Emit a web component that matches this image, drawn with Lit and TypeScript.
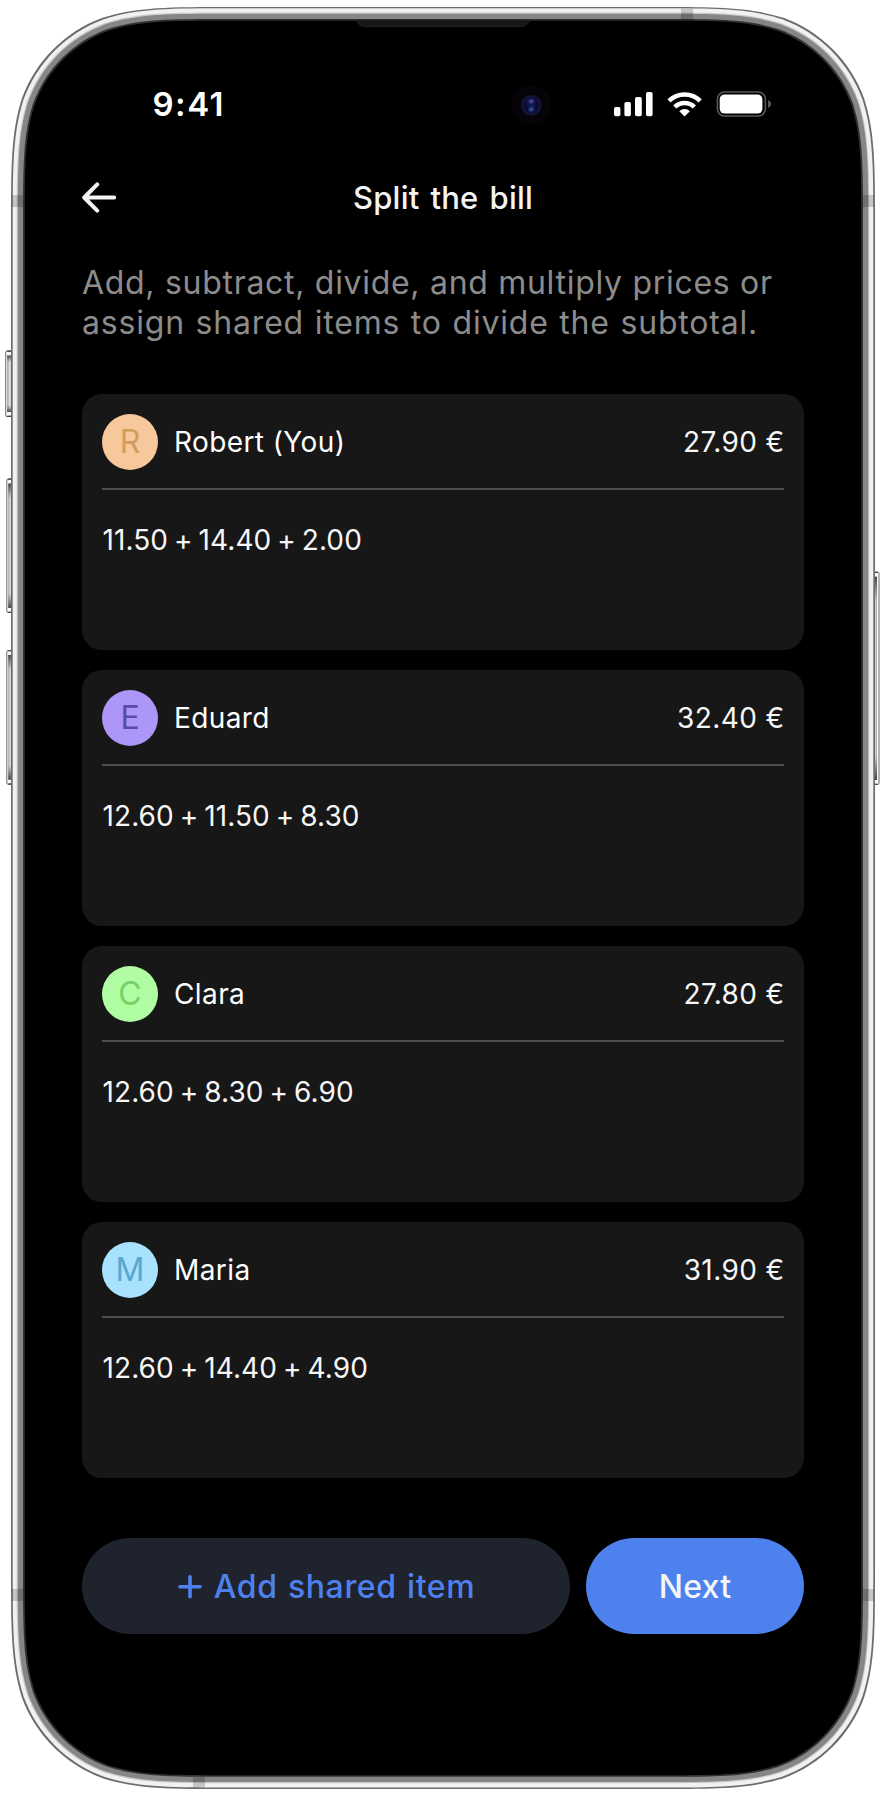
import { LitElement, html, svg, css } from "lit";
import { customElement, property } from "lit/decorators.js";
import { styleMap } from "lit/directives/style-map.js";

/** Continuous-corner rounded rectangle between two opposite corners. */
function squircle(x0: number, y0: number, x1: number, y1: number, r: number): string {
  const a = 1.528665 * r, b = 1.088493 * r, c = 0.868407 * r, d = 0.631494 * r;
  const e = 0.074911 * r, f = 0.372824 * r, g = 0.16906 * r;
  return `M${x0 + a} ${y0}H${x1 - a}
    C${x1 - b} ${y0} ${x1 - c} ${y0} ${x1 - d} ${y0 + e}
    C${x1 - f} ${y0 + g} ${x1 - g} ${y0 + f} ${x1 - e} ${y0 + d}
    C${x1} ${y0 + c} ${x1} ${y0 + b} ${x1} ${y0 + a}V${y1 - a}
    C${x1} ${y1 - b} ${x1} ${y1 - c} ${x1 - e} ${y1 - d}
    C${x1 - g} ${y1 - f} ${x1 - f} ${y1 - g} ${x1 - d} ${y1 - e}
    C${x1 - c} ${y1} ${x1 - b} ${y1} ${x1 - a} ${y1}H${x0 + a}
    C${x0 + b} ${y1} ${x0 + c} ${y1} ${x0 + d} ${y1 - e}
    C${x0 + f} ${y1 - g} ${x0 + g} ${y1 - f} ${x0 + e} ${y1 - d}
    C${x0} ${y1 - c} ${x0} ${y1 - b} ${x0} ${y1 - a}V${y0 + a}
    C${x0} ${y0 + b} ${x0} ${y0 + c} ${x0 + e} ${y0 + d}
    C${x0 + g} ${y0 + f} ${x0 + f} ${y0 + g} ${x0 + d} ${y0 + e}
    C${x0 + c} ${y0} ${x0 + b} ${y0} ${x0 + a} ${y0}Z`;
}

@customElement("phone-frame")
class PhoneFrame extends LitElement {
  static styles = css`
    :host { display: block; }
    svg { display: block; }
  `;

  private sideButton(x: number, y: number, w: number, h: number, dir: "l" | "r") {
    const inner = dir === "l" ? x + 2 : x;
    return svg`
      <rect x=${x + 0.5} y=${y + 0.5} width=${w} height=${h - 1} rx="1.2" fill="#fafafa" stroke="#6a6a6a" stroke-width="1"/>
      <rect x=${inner} y=${y + 5} width=${w - 1.5} height=${h - 10} fill=${dir === "l" ? "url(#btnL)" : "url(#btnR)"}/>
      <rect x=${inner} y=${y + 5} width=${w - 1.5} height=${h - 10} fill="url(#btnEnds)"/>
      <rect x=${inner} y=${y} width=${w - 1} height="1.4" fill="#444"/>
      <rect x=${inner} y=${y + h - 1.4} width=${w - 1} height="1.4" fill="#444"/>`;
  }

  render() {
    return html`
      <svg width="884" height="1794" viewBox="0 0 884 1794">
        <defs>
          <linearGradient id="btnL"><stop offset="0" stop-color="#9a9a9a"/><stop offset=".35" stop-color="#dedede"/><stop offset=".7" stop-color="#cccccc"/><stop offset="1" stop-color="#777"/></linearGradient>
          <linearGradient id="btnR"><stop offset="0" stop-color="#6e6e6e"/><stop offset=".45" stop-color="#777"/><stop offset=".6" stop-color="#d8d8d8"/><stop offset="1" stop-color="#a8a8a8"/></linearGradient>
          <linearGradient id="btnEnds" x2="0" y2="1"><stop offset="0" stop-color="#222" stop-opacity=".8"/><stop offset=".12" stop-color="#444" stop-opacity="0"/><stop offset=".88" stop-color="#444" stop-opacity="0"/><stop offset="1" stop-color="#222" stop-opacity=".8"/></linearGradient>
          <radialGradient id="lens"><stop offset="0" stop-color="#141a58"/><stop offset=".6" stop-color="#090a33"/><stop offset=".85" stop-color="#14173a"/><stop offset="1" stop-color="#0d0e22"/></radialGradient>
          <radialGradient id="glintTop"><stop offset="0" stop-color="#6e66c8"/><stop offset="1" stop-color="#2a2478" stop-opacity="0"/></radialGradient>
          <radialGradient id="glintLow"><stop offset="0" stop-color="#3a70a8"/><stop offset="1" stop-color="#1f2a80" stop-opacity="0"/></radialGradient>
        </defs>
        ${this.sideButton(5.2, 350.5, 8, 66.5, "l")}
        ${this.sideButton(6.3, 478.5, 7, 134.5, "l")}
        ${this.sideButton(6.3, 650, 7, 134.7, "l")}
        ${this.sideButton(872, 571.7, 6.5, 213.3, "r")}
        <path d=${squircle(11, 7, 875, 1789, 145)} fill="#6c6c6c"/>
        <path d=${squircle(12.7, 8.3, 873.3, 1787.5, 144.6)} fill="#f1f1f1"/>
        <path d=${squircle(16.6, 12.6, 869.2, 1783.2, 140)} fill="#c9c9c9"/>
        <path d=${squircle(17.8, 13.8, 868.2, 1782, 139)} fill="#848688"/>
        <path d=${squircle(23, 19, 863, 1776.8, 134)} fill="#303132"/>
        <path d=${squircle(24.8, 20.8, 861.2, 1775.2, 132.5)} fill="#000"/>
        <g fill="#000" fill-opacity=".18">
          <rect x="681" y="8.5" width="12" height="11"/>
          <rect x="193" y="1777" width="12" height="10.5"/>
          <rect x="12" y="195" width="11" height="12"/>
          <rect x="863" y="195" width="11" height="12"/>
          <rect x="12" y="1589" width="11" height="12"/>
          <rect x="863" y="1589" width="11" height="12"/>
        </g>
        <path d="M355.3 20C358 23.5 360 26.4 365 26.4H521C526 26.4 528 23.5 530.7 20Z" fill="#151716" stroke="#292b2a" stroke-width=".8"/>
        <circle cx="531.3" cy="104.8" r="19.5" fill="#060408"/>
        <circle cx="531.3" cy="105.3" r="10.5" fill="url(#lens)"/>
        <ellipse cx="531.3" cy="101.2" rx="4.6" ry="3.6" fill="url(#glintTop)"/>
        <ellipse cx="531.3" cy="109.4" rx="4.2" ry="4" fill="url(#glintLow)"/>
      </svg>`;
  }
}

@customElement("status-bar")
class StatusBar extends LitElement {
  static styles = css`
    :host { display: flex; align-items: center; justify-content: space-between; height: 40px; padding: 0 32px 0 70.5px; color: #fff; }
    .time { font-size: 33px; font-weight: 600; letter-spacing: 1.5px; line-height: 40px; }
    svg { display: block; }
  `;

  render() {
    return html`
      <span class="time">9:41</span>
      <svg width="158" height="28" viewBox="0 0 158 28" fill="#fff">
        <rect x="0" y="17" width="6.4" height="9.3" rx="1.8"/>
        <rect x="10.4" y="12" width="6.5" height="14.3" rx="1.8"/>
        <rect x="21" y="7" width="6.8" height="19.3" rx="1.8"/>
        <rect x="32" y="2" width="6.6" height="24.3" rx="1.8"/>
        <g fill="none" stroke="#fff" stroke-width="4.5">
          <path d="M55 10.8A22.4 22.4 0 0 1 86.2 10.8"/>
          <path d="M60.8 17A14 14 0 0 1 80.4 17"/>
        </g>
        <path d="M70.6 26.6L65.3 21.2A7.6 7.6 0 0 1 75.9 21.2Z"/>
        <rect x="103.4" y="2" width="48" height="24" rx="7.2" fill="none" stroke="#585858" stroke-width="1.6"/>
        <rect x="105.7" y="4.4" width="42.7" height="19.2" rx="5"/>
        <path d="M154.2 10.2C155.8 10.8 156.9 12.4 156.9 14S155.8 17.2 154.2 17.8Z" fill="#636363"/>
      </svg>`;
  }
}

interface Person {
  name: string;
  amount: string;
  items: string;
  bg: string;
  fg: string;
}

@customElement("person-card")
class PersonCard extends LitElement {
  static styles = css`
    :host { display: flex; flex-direction: column; box-sizing: border-box; height: 256px; padding: 20px; border-radius: 20px; background: #171717; color: #f6f6f6; font-size: 28px; line-height: 40px; }
    .head { display: flex; align-items: center; padding-bottom: 18px; border-bottom: 2px solid #4f4f4f; letter-spacing: 0.4px; }
    .avatar { width: 56px; height: 56px; border-radius: 50%; display: flex; align-items: center; justify-content: center; font-size: 32px; letter-spacing: 0; }
    .name { margin-left: 16px; color: #fff; }
    .amount { margin-left: auto; margin-right: -0.6px; }
    .items { padding: 30px 0 0 0.5px; letter-spacing: 0.1px; word-spacing: -2.1px; }
  `;

  @property({ attribute: false }) person!: Person;

  render() {
    const p = this.person;
    return html`
      <div class="head">
        <span class="avatar" style=${styleMap({ background: p.bg, color: p.fg })}>${p.name[0]}</span>
        <span class="name">${p.name}</span>
        <span class="amount">${p.amount}</span>
      </div>
      <div class="items">${p.items}</div>`;
  }
}

const PEOPLE: Person[] = [
  { name: "Robert (You)", amount: "27.90 €", items: "11.50 + 14.40 + 2.00", bg: "#f6c89b", fg: "#d39b60" },
  { name: "Eduard", amount: "32.40 €", items: "12.60 + 11.50 + 8.30", bg: "#ac96f8", fg: "#5f4a9f" },
  { name: "Clara", amount: "27.80 €", items: "12.60 + 8.30 + 6.90", bg: "#b0fda3", fg: "#76d266" },
  { name: "Maria", amount: "31.90 €", items: "12.60 + 14.40 + 4.90", bg: "#a8e2fe", fg: "#57a8cf" },
];

@customElement("app-root")
class AppRoot extends LitElement {
  static styles = css`
    :host { display: grid; width: 884px; height: 1794px; background: #fff; font-family: Inter, "Liberation Sans", sans-serif; }
    .layer { grid-area: 1 / 1; }
    .screen { display: flex; flex-direction: column; padding: 84px 80px 0 82px; }
    .title-bar { display: grid; grid-template-columns: 36px 1fr 36px; align-items: center; height: 40px; margin-top: 54px; }
    .title-bar svg { display: block; }
    h1 { margin: 0; text-align: center; color: #f4f4f4; font-size: 31px; font-weight: 500; line-height: 40px; letter-spacing: 0.2px; word-spacing: 2.6px; }
    .intro { margin: 44.5px 0 51.5px; color: #8c8c8c; font-size: 32px; line-height: 40px; white-space: nowrap; }
    .line { display: block; }
    .line.first { letter-spacing: 0.7px; }
    .line.second { letter-spacing: 0.82px; word-spacing: 0.8px; }
    .cards { display: grid; gap: 20px; }
    .actions { display: grid; grid-template-columns: 488px 218px; gap: 16px; margin-top: 60px; }
    button { display: flex; align-items: center; justify-content: center; height: 96px; padding: 1px 0 0; border: 0; border-radius: 48px; font: 500 32px/40px Inter, "Liberation Sans", sans-serif; }
    .add { gap: 11px; background: #1e232e; color: #4e81ee; letter-spacing: 0.62px; word-spacing: 1.2px; }
    .next { background: #4c81ee; color: #f4f5f8; letter-spacing: 0.27px; }
  `;

  render() {
    return html`
      <phone-frame class="layer"></phone-frame>
      <main class="layer screen">
        <status-bar></status-bar>
        <header class="title-bar">
          <svg width="36" height="32" viewBox="0 0 36 32" fill="none" stroke="#f4f4f4" stroke-width="4" stroke-linecap="round" stroke-linejoin="round">
            <path d="M15.2 2.4L2.2 15.5L15.2 28.6M2.6 15.5H32.2"/>
          </svg>
          <h1>Split the bill</h1>
        </header>
        <p class="intro">
          <span class="line first">Add, subtract, divide, and multiply prices or</span>
          <span class="line second">assign shared items to divide the subtotal.</span>
        </p>
        <section class="cards">
          ${PEOPLE.map((p) => html`<person-card .person=${p}></person-card>`)}
        </section>
        <footer class="actions">
          <button class="add">
            <svg width="26" height="26" viewBox="0 0 26 26" fill="none" stroke="currentColor" stroke-width="3.6" stroke-linecap="round"><path d="M13 2.8V22.8M3 12.8H23"/></svg>
            <span>Add shared item</span>
          </button>
          <button class="next">Next</button>
        </footer>
      </main>`;
  }
}
